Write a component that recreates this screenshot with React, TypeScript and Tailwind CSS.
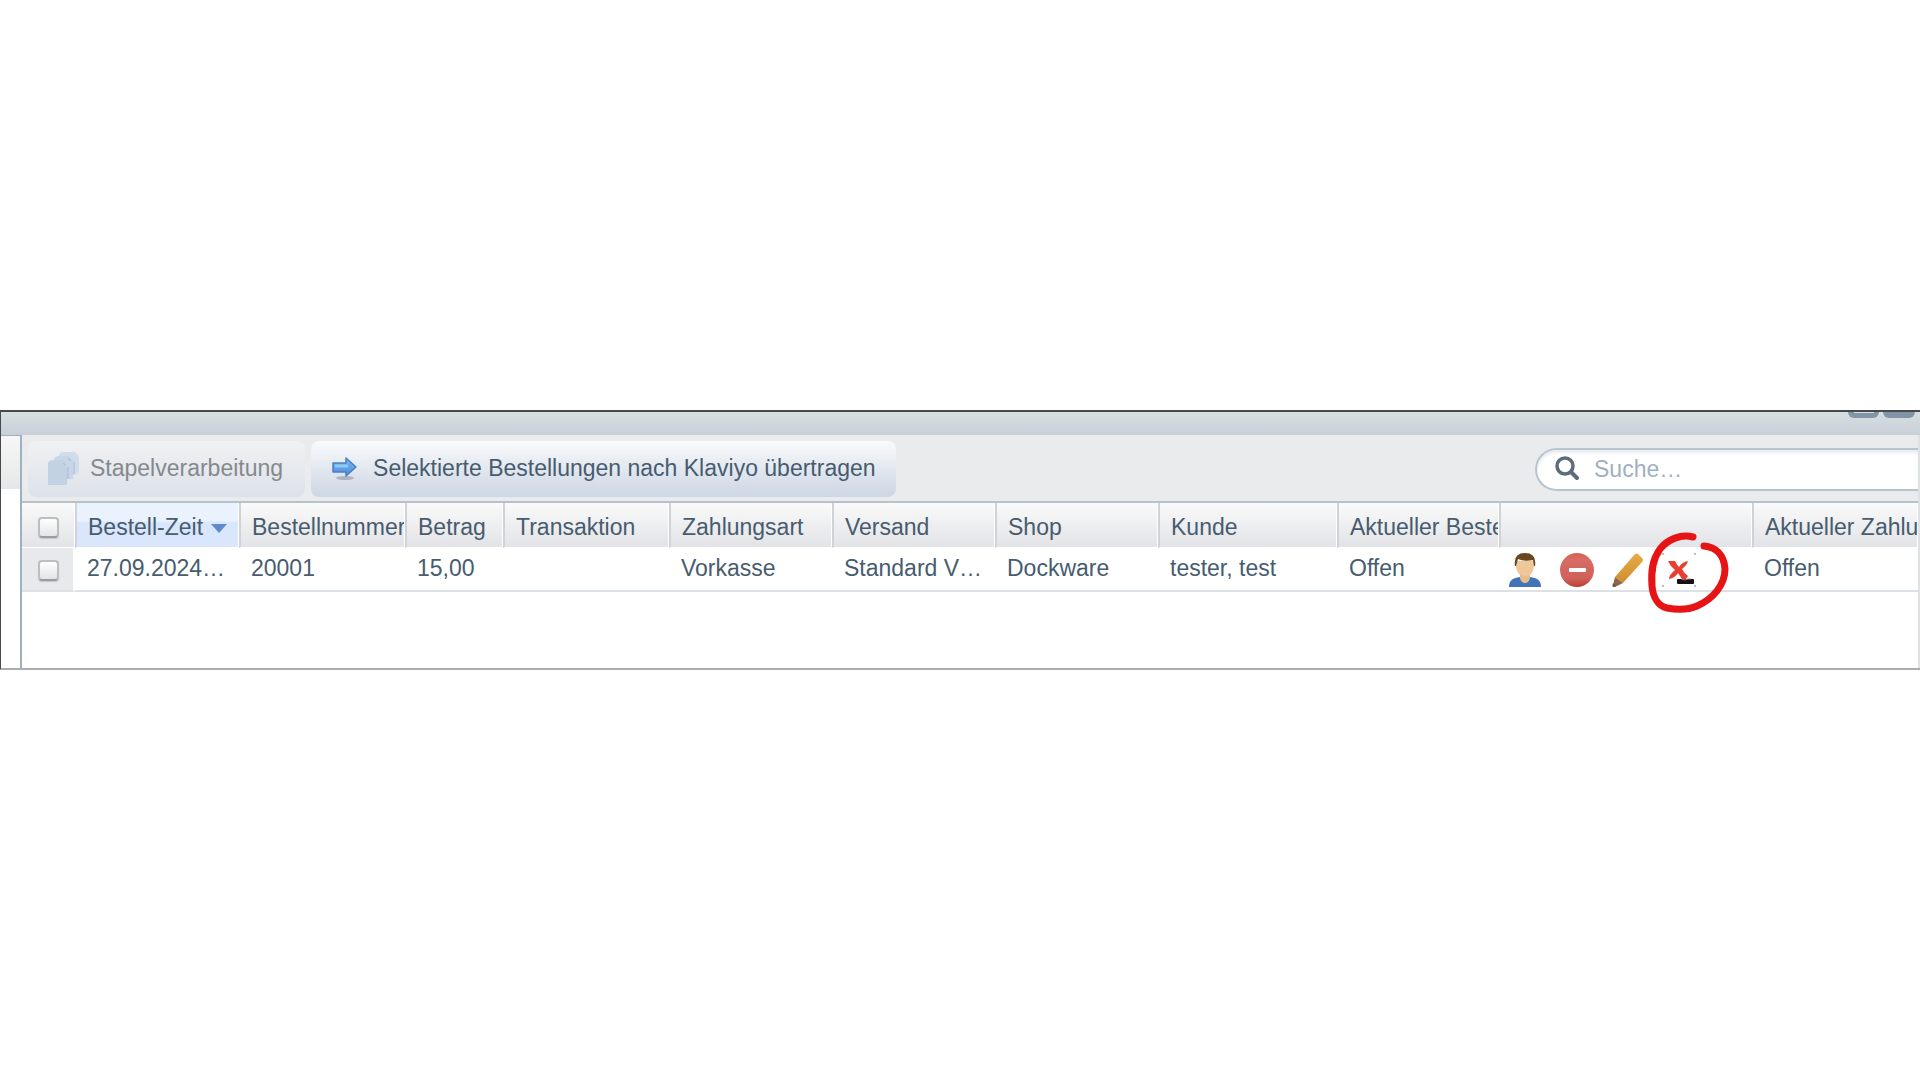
import React from "react";

type Column = {
  key: string;
  label: string;
  width: string;
  sorted?: boolean;
};

const columns: Column[] = [
  { key: "time", label: "Bestell-Zeit", width: "w-[164px]", sorted: true },
  { key: "number", label: "Bestellnummer", width: "w-[166px]" },
  { key: "amount", label: "Betrag", width: "w-[98px]" },
  { key: "transaction", label: "Transaktion", width: "w-[166px]" },
  { key: "payment", label: "Zahlungsart", width: "w-[163px]" },
  { key: "shipping", label: "Versand", width: "w-[163px]" },
  { key: "shop", label: "Shop", width: "w-[163px]" },
  { key: "customer", label: "Kunde", width: "w-[179px]" },
  { key: "orderStatus", label: "Aktueller Beste", width: "w-[162px]" },
  { key: "actions", label: "", width: "w-[253px]" },
  { key: "paymentStatus", label: "Aktueller Zahlu", width: "" },
];

const orders: Record<string, string>[] = [
  {
    time: "27.09.2024…",
    number: "20001",
    amount: "15,00",
    transaction: "",
    payment: "Vorkasse",
    shipping: "Standard V…",
    shop: "Dockware",
    customer: "tester, test",
    orderStatus: "Offen",
    paymentStatus: "Offen",
  },
];

const PagesIcon = () => (
  <svg width="32" height="34" viewBox="0 0 32 34" aria-hidden="true">
    <path d="M11 4q1-3 5-3h9q6 1 6 7v13l-4 3H11z" fill="#d0dcea" />
    <path d="M6 8q1-3 5-3h8q6 1 6 7v16H6z" fill="#c9d6e7" />
    <path d="M0 12q1-3 5-3h8q6 1 6 7v18H0z" fill="#c2d1e4" />
    <path d="M20 7l3 3M15 12l2 2M20 16v12M26 11v12" stroke="#b2c4dc" strokeWidth="1.5" />
  </svg>
);

const ArrowIcon = () => (
  <svg width="28" height="24" viewBox="0 0 28 24" aria-hidden="true">
    <defs>
      <linearGradient id="arrow" x1="0" y1="0" x2="0" y2="1">
        <stop offset="0" stopColor="#7db9f0" />
        <stop offset="1" stopColor="#4c8ddb" />
      </linearGradient>
    </defs>
    <ellipse cx="14" cy="22" rx="9" ry="2" fill="#8d97a6" opacity="0.6" />
    <path d="M2 7h13V2l10 9-10 9v-4H2z" fill="url(#arrow)" stroke="#4a7fc4" strokeWidth="1.5" strokeLinejoin="round" />
    <path d="M4 10h13" fill="none" stroke="#8fc9f8" strokeWidth="3" />
  </svg>
);

const SearchIcon = () => (
  <svg width="26" height="26" viewBox="0 0 26 26" aria-hidden="true">
    <circle cx="10" cy="10" r="8" fill="none" stroke="#5d6b7a" strokeWidth="3.5" />
    <path d="M16 16l6 6" stroke="#5d6b7a" strokeWidth="4" strokeLinecap="round" />
  </svg>
);

const UserIcon = () => (
  <svg width="34" height="34" viewBox="0 0 34 34" aria-hidden="true">
    <path d="M1 34c0-7 4-9 11-10h10c7 1 11 3 11 10z" fill="#4273b8" />
    <path d="M12 19h10v6q-1 5-5 5t-5-5z" fill="#e8bb8b" />
    <path d="M8 8h18v6q-1 9-9 9T8 14z" fill="#f0c799" />
    <path d="M7 13Q5 0 17 0t10 13h-1l-1-6q-8 2-15-1L8 13z" fill="#6b4420" />
  </svg>
);

const CancelIcon = () => (
  <svg width="34" height="34" viewBox="0 0 34 34" aria-hidden="true">
    <defs>
      <linearGradient id="cancel" x1="0" y1="0" x2="0" y2="1">
        <stop offset="0" stopColor="#d95f52" />
        <stop offset="0.2" stopColor="#d66d66" />
        <stop offset="0.75" stopColor="#d06159" />
        <stop offset="1" stopColor="#b93f32" />
      </linearGradient>
    </defs>
    <circle cx="17" cy="17" r="17" fill="url(#cancel)" />
    <rect x="9" y="15" width="17" height="4" rx="1" fill="#fff" />
  </svg>
);

const PencilIcon = () => (
  <svg width="32" height="34" viewBox="0 0 32 34" aria-hidden="true">
    <defs>
      <linearGradient id="pencil" x1="0" y1="0" x2="0" y2="1">
        <stop offset="0" stopColor="#e4ac48" />
        <stop offset="1" stopColor="#d28d2f" />
      </linearGradient>
    </defs>
    <path d="M23 1q1-1 3 0l4 4q2 2 0 4L11 30l-8-6z" fill="url(#pencil)" />
    <path d="M3 24l8 6-8 4q-2 0-2-2z" fill="#8f6550" />
    <path d="M1 30l3 3-3 1q-1-1 0-4z" fill="#6f4c3c" />
  </svg>
);

const KlaviyoErrorIcon = () => (
  <svg width="34" height="34" viewBox="0 0 34 34" aria-hidden="true">
    <path
      d="M6 8h7q2 4 4 6 3-5 9-6-1 4-6 8 2 4 6 7l-2 3h-4q-2-3-4-6-3 5-9 6 0-4 6-9-5-4-7-9z"
      fill="#ea3f30"
    />
    <rect x="15" y="26" width="17" height="5" rx="1" fill="#1b0d10" />
    <path d="M19 26l4 1 3-1h3" stroke="#8d8084" strokeWidth="1" fill="none" />
    <path d="M0 0h2v2H0zM32 0h2v2h-2zM0 32h2v2H0zM32 32h2v2h-2z" fill="#b9bec2" />
  </svg>
);

// hand-drawn marker ring, lies over the last action
const MarkerRing = () => (
  <svg
    width="84"
    height="86"
    viewBox="0 0 84 86"
    className="pointer-events-none absolute -top-[24px] -left-[16px] z-10"
    aria-hidden="true"
  >
    <path
      d="M47 8C35 5 22 10 14 20C6 31 5 43 6 57C7 68 12 77 21 79C32 81 42 81 51 77C67 70 79 56 79 40C78 25 69 18 58 17"
      fill="none"
      stroke="#e61414"
      strokeWidth="7"
      strokeLinecap="round"
      strokeLinejoin="round"
    />
  </svg>
);

const Checkbox = ({ label }: { label: string }) => (
  <input
    type="checkbox"
    aria-label={label}
    className="block size-[21px] appearance-none rounded-sm border-2 border-[#bcbec0] border-b-[#9a9c9e] bg-linear-to-b from-white to-[#e3e4e5] shadow-[0_1px_1px_#c4c6c8]"
  />
);

const App: React.FC = () => {
  return (
    <div className="flex min-h-screen items-center overflow-hidden bg-white font-['Liberation_Sans',Arial,sans-serif] text-[23px] leading-[30px] text-[#475c6f]">
      <div className="flex h-[260px] w-full flex-col border-t-2 border-b-2 border-l border-t-[#47494b] border-b-[#aaacae] border-l-[#47494b]">
        <div className="flex h-[23px] shrink-0 items-start justify-end gap-1 bg-linear-to-b from-[#d8dfe2] to-[#c8cfd7] pr-[5px]">
          <button aria-label="Minimieren" className="flex h-[6px] w-[31px] justify-center rounded-b-md bg-[#8195a6]">
            <span className="h-px w-5 bg-[#d5dce1]" />
          </button>
          <button aria-label="Schließen" className="h-[6px] w-[32px] rounded-b-md bg-[#8195a6]" />
        </div>

        <div className="flex min-h-0 flex-1">
          <div className="w-[21px] shrink-0 border-t border-r-2 border-[#9fb1c1] bg-white">
            <div className="h-[53px] bg-linear-to-b from-[#f7f7f7] to-[#e6e7e8]" />
          </div>

          <div className="flex min-w-0 flex-1 flex-col border-r-2 border-[#dfe2e4]">
            <div className="flex h-[68px] shrink-0 items-center gap-[6px] border-b-2 border-[#b6c2cc] bg-[#eaebed] pt-[2px] pl-[6px]">
              <button
                disabled
                className="flex h-[56px] items-center gap-[10px] rounded-lg bg-linear-to-b from-[#f0f1f2] to-[#dde2ea] pr-[22px] pb-[2px] pl-[20px] text-[#85898d]"
              >
                <PagesIcon />
                Stapelverarbeitung
              </button>
              <button className="flex h-[56px] items-center gap-[14px] rounded-lg bg-linear-to-b from-[#f9fafb] to-[#cdd6e4] pr-[20px] pb-[2px] pl-[20px]">
                <ArrowIcon />
                Selektierte Bestellungen nach Klaviyo übertragen
              </button>
              <label className="ml-auto flex h-[43px] w-[383px] items-center gap-[13px] rounded-l-full border-2 border-r-0 border-[#b8c5cf] bg-white pl-[18px] shadow-[inset_0_3px_3px_#e9edf0]">
                <SearchIcon />
                <input
                  type="text"
                  aria-label="Suche"
                  placeholder="Suche…"
                  className="min-w-0 flex-1 bg-transparent outline-none placeholder:text-[#a0b0c0]"
                />
              </label>
            </div>

            <table className="w-full table-fixed border-separate border-spacing-0">
              <colgroup>
                <col className="w-[53px]" />
                {columns.map((col) => (
                  <col key={col.key} className={col.width} />
                ))}
              </colgroup>
              <thead>
                <tr className="h-[45px] bg-linear-to-b from-[#fafafa] to-[#e2e3e6]">
                  <th className="border-r border-b border-white pt-1 pl-4 font-normal">
                    <Checkbox label="Alle auswählen" />
                  </th>
                  {columns.map((col) => (
                    <th
                      key={col.key}
                      className={`overflow-hidden border-r border-b border-l-2 border-white border-l-[#cfd2d7] pt-1 pl-[11px] text-left font-normal whitespace-nowrap ${
                        col.sorted ? "bg-linear-to-b from-[#eaf2fe] from-40% to-[#d9e6fb] to-45%" : ""
                      }`}
                    >
                      {col.label}
                      {col.sorted && (
                        <svg width="16" height="9" viewBox="0 0 16 9" className="ml-2 inline-block" aria-hidden="true">
                          <path d="M0 0h16L8 9z" fill="#5f8bcb" />
                        </svg>
                      )}
                    </th>
                  ))}
                </tr>
              </thead>
              <tbody>
                {orders.map((order) => (
                  <tr key={order.number} className="h-[44px]">
                    <td className="border-r-2 border-b-2 border-r-white border-b-[#dce1e6] bg-[#e8e9ea] pt-[2px] pl-4">
                      <Checkbox label={`Bestellung ${order.number}`} />
                    </td>
                    {columns.map((col) =>
                      col.key === "actions" ? (
                        <td key={col.key} className="border-b-2 border-[#dce1e6] pt-[2px] pl-[9px]">
                          <div className="flex items-center gap-[18px]">
                            <button aria-label="Kunde öffnen">
                              <UserIcon />
                            </button>
                            <button aria-label="Bestellung löschen">
                              <CancelIcon />
                            </button>
                            <button aria-label="Bestellung bearbeiten">
                              <PencilIcon />
                            </button>
                            <button aria-label="Nach Klaviyo übertragen" className="relative">
                              <KlaviyoErrorIcon />
                              <MarkerRing />
                            </button>
                          </div>
                        </td>
                      ) : (
                        <td
                          key={col.key}
                          className="overflow-hidden border-b-2 border-[#dce1e6] pb-[2px] pl-[12px] whitespace-nowrap"
                        >
                          {order[col.key]}
                        </td>
                      )
                    )}
                  </tr>
                ))}
              </tbody>
            </table>
          </div>
        </div>
      </div>
    </div>
  );
};

export default App;
